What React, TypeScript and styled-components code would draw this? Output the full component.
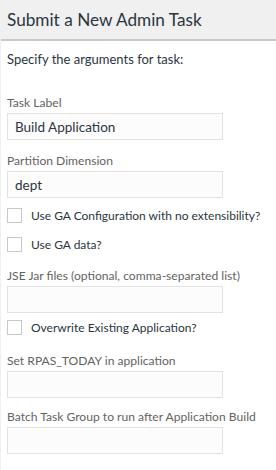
import React from "react";
import styled, { createGlobalStyle } from "styled-components";

const Global = createGlobalStyle`
  html, body { margin: 0; padding: 0; background: #ffffff; }
  body { font-family: "Lato", "Open Sans", sans-serif; }
`;

const Panel = styled.div`
  width: 276px;
  height: 470px;
  background: #ffffff;
  display: flex;
  flex-direction: column;
  overflow: hidden;
  box-sizing: border-box;
  border-left: 1px solid #f0f0f0;
`;

const Header = styled.div`
  flex: none;
  height: 41px;
  background: #f0f0f0;
  border-bottom: 2px solid #c9c9c9;
  display: flex;
  align-items: center;
  padding: 0 6px;
  box-sizing: border-box;
`;

const Title = styled.h1`
  margin: 0;
  font-size: 17.2px;
  font-weight: 400;
  color: #2b3540;
  white-space: nowrap;
`;

const Body = styled.div`
  flex: none;
  display: flex;
  flex-direction: column;
  padding: 10px 6px 0 6px;
`;

const Intro = styled.p`
  margin: 0 0 29px 0;
  font-size: 13px;
  line-height: 16px;
  color: #2b3540;
`;

const Field = styled.div<{ $gap: number }>`
  display: flex;
  flex-direction: column;
  gap: 3px;
  margin-bottom: ${(p) => p.$gap}px;
`;

const Label = styled.label`
  font-size: 12.1px;
  line-height: 14px;
  color: #636363;
  white-space: nowrap;
`;

const Input = styled.input`
  box-sizing: border-box;
  width: 216px;
  height: 27px;
  border: 1px solid #e2e2e2;
  background: #fcfcfc;
  padding: 0 7px;
  font-family: inherit;
  font-size: 13.5px;
  color: #2b3540;
  outline: none;
`;

const CheckRow = styled.label<{ $gap: number }>`
  display: flex;
  align-items: center;
  gap: 9px;
  margin-bottom: ${(p) => p.$gap}px;
  font-size: 12px;
  line-height: 15px;
  color: #2b3540;
  white-space: nowrap;
`;

const Box = styled.span`
  box-sizing: border-box;
  width: 15px;
  height: 15px;
  border: 1px solid #c8c8c8;
  background: #ffffff;
  flex: none;
`;

export default function App() {
  return (
    <Panel>
      <Global />
      <Header>
        <Title>Submit a New Admin Task</Title>
      </Header>
      <Body>
        <Intro>Specify the arguments for task:</Intro>
        <Field $gap={14}>
          <Label>Task Label</Label>
          <Input defaultValue="Build Application" />
        </Field>
        <Field $gap={10}>
          <Label>Partition Dimension</Label>
          <Input defaultValue="dept" />
        </Field>
        <CheckRow $gap={14}>
          <Box />
          Use GA Configuration with no extensibility?
        </CheckRow>
        <CheckRow $gap={17}>
          <Box />
          Use GA data?
        </CheckRow>
        <Field $gap={7}>
          <Label>JSE Jar files (optional, comma-separated list)</Label>
          <Input />
        </Field>
        <CheckRow $gap={19}>
          <Box />
          Overwrite Existing Application?
        </CheckRow>
        <Field $gap={12}>
          <Label>Set RPAS_TODAY in application</Label>
          <Input />
        </Field>
        <Field $gap={0}>
          <Label>Batch Task Group to run after Application Build</Label>
          <Input />
        </Field>
      </Body>
    </Panel>
  );
}
